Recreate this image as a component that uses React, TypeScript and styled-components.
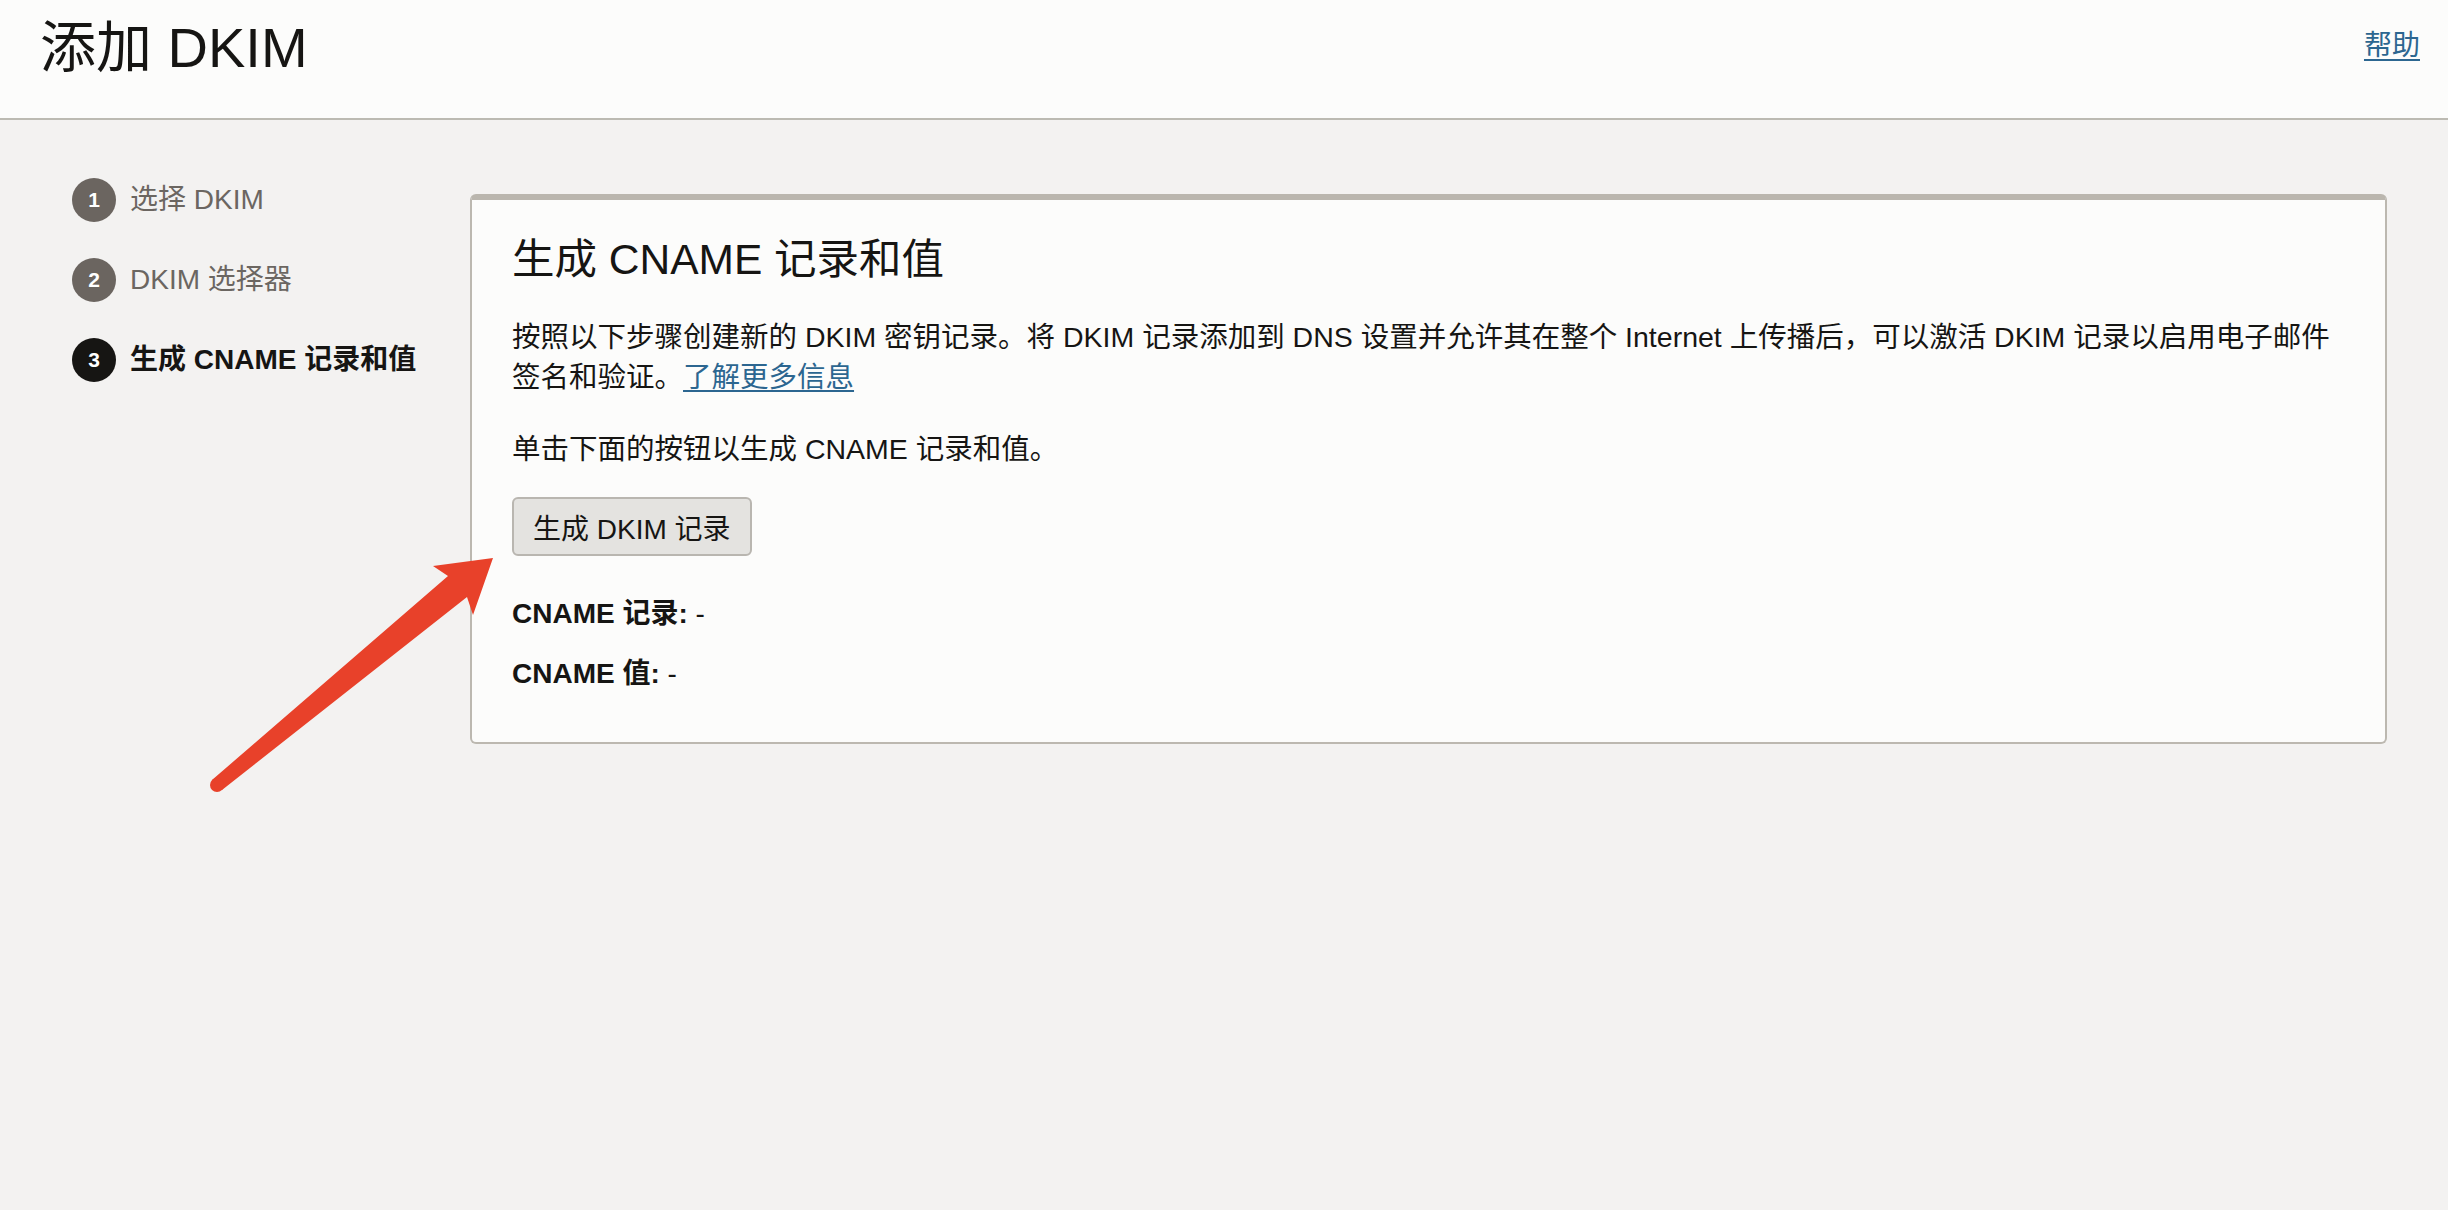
import React from 'react';
import styled, { createGlobalStyle } from 'styled-components';

const GlobalStyle = createGlobalStyle`
  html, body {
    margin: 0;
    padding: 0;
    background: #f3f2f1;
  }
  body {
    font-family: "Liberation Sans", "Noto Sans CJK SC", sans-serif;
    color: #161513;
  }
  * {
    box-sizing: border-box;
  }
`;

const Page = styled.div`
  position: relative;
  min-height: 100vh;
  background: #f3f2f1;
`;

const Header = styled.header`
  height: 120px;
  background: #fcfcfb;
  border-bottom: 2px solid #bcbab2;
  display: flex;
  justify-content: space-between;
  align-items: flex-start;
  padding: 20px 28px 0 40px;
`;

const PageTitle = styled.h1`
  margin: 0;
  font-size: 56px;
  line-height: 56px;
  font-weight: 400;
  color: #161513;
`;

const HelpLink = styled.a`
  font-size: 28px;
  line-height: 52px;
  color: #2c6690;
  text-decoration: underline;
  text-underline-offset: 4px;
  cursor: pointer;
`;

const Main = styled.main`
  display: flex;
  align-items: flex-start;
  padding: 58px 61px 0 0;
`;

const Steps = styled.ol`
  list-style: none;
  margin: 0;
  padding: 0 0 0 72px;
  width: 470px;
  flex-shrink: 0;
  display: flex;
  flex-direction: column;
  gap: 36px;
`;

const Step = styled.li<{ $active?: boolean }>`
  display: flex;
  align-items: center;
  gap: 14px;
  font-size: 28px;
  line-height: 44px;
  font-weight: ${(p) => (p.$active ? 700 : 400)};
  color: ${(p) => (p.$active ? '#161513' : '#6b6661')};
`;

const StepNumber = styled.span<{ $active?: boolean }>`
  width: 44px;
  height: 44px;
  border-radius: 50%;
  flex-shrink: 0;
  display: flex;
  align-items: center;
  justify-content: center;
  background: ${(p) => (p.$active ? '#161513' : '#6b6560')};
  color: #ffffff;
  font-size: 21px;
  font-weight: 700;
`;

const Card = styled.section`
  flex: 1;
  margin-top: 16px;
  background: #fcfcfb;
  border: 2px solid #bcb8b0;
  border-top: 6px solid #bab6ae;
  border-radius: 6px;
  padding: 34px 40px 48px 40px;
`;

const CardTitle = styled.h2`
  margin: 0;
  font-size: 42.5px;
  line-height: 52px;
  font-weight: 400;
`;

const Paragraph = styled.p<{ $gap?: number }>`
  margin: ${(p) => p.$gap ?? 31}px 0 0 0;
  font-size: 28.5px;
  line-height: 40px;
`;

const InlineLink = styled.a`
  color: #2c6690;
  text-decoration: underline;
  text-underline-offset: 3px;
  cursor: pointer;
`;

const Button = styled.button`
  display: block;
  margin-top: 28px;
  height: 59px;
  padding: 0 19px;
  background: #e4e3e0;
  border: 2px solid #b9b6b0;
  border-radius: 6px;
  font-family: inherit;
  font-size: 28px;
  color: #161513;
  cursor: pointer;
`;

const Field = styled.div<{ $gap: number }>`
  margin-top: ${(p) => p.$gap}px;
  font-size: 28px;
  line-height: 40px;
`;

const FieldLabel = styled.span`
  font-weight: 700;
`;

const Annotation = styled.svg`
  position: absolute;
  left: 0;
  top: 0;
  pointer-events: none;
`;

const steps = ['选择 DKIM', 'DKIM 选择器', '生成 CNAME 记录和值'];

export default function App() {
  return (
    <Page>
      <GlobalStyle />
      <Header>
        <PageTitle>添加 DKIM</PageTitle>
        <HelpLink>帮助</HelpLink>
      </Header>
      <Main>
        <Steps>
          {steps.map((label, i) => {
            const active = i === steps.length - 1;
            return (
              <Step key={label} $active={active}>
                <StepNumber $active={active}>{i + 1}</StepNumber>
                {label}
              </Step>
            );
          })}
        </Steps>
        <Card>
          <CardTitle>生成 CNAME 记录和值</CardTitle>
          <Paragraph>
            按照以下步骤创建新的 DKIM 密钥记录。将 DKIM 记录添加到 DNS 设置并允许其在整个 Internet
            上传播后，可以激活 DKIM 记录以启用电子邮件签名和验证。<InlineLink>了解更多信息</InlineLink>
          </Paragraph>
          <Paragraph $gap={32}>单击下面的按钮以生成 CNAME 记录和值。</Paragraph>
          <Button>生成 DKIM 记录</Button>
          <Field $gap={38}>
            <FieldLabel>CNAME 记录:</FieldLabel> -
          </Field>
          <Field $gap={20}>
            <FieldLabel>CNAME 值:</FieldLabel> -
          </Field>
        </Card>
      </Main>
      <Annotation width="2448" height="1210" viewBox="0 0 2448 1210">
        <polygon
          points="212,780 448,576 433,566 493,558 473,615 467,597 222,790"
          fill="#e8412a"
        />
        <circle cx="217" cy="785" r="7" fill="#e8412a" />
      </Annotation>
    </Page>
  );
}
